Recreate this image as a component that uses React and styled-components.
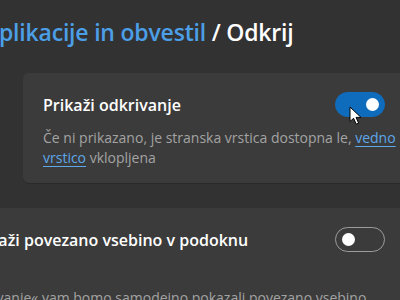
import React from "react";
import styled, { createGlobalStyle } from "styled-components";

const GlobalStyle = createGlobalStyle`
  html, body {
    margin: 0;
    padding: 0;
    background: #323232;
    overflow: hidden;
  }
  body {
    font-family: "Open Sans", "Noto Sans", "Liberation Sans", sans-serif;
  }
`;

const Page = styled.div`
  position: relative;
  width: 400px;
  height: 300px;
  overflow: hidden;
  background: #323232;
`;

const Heading = styled.h1`
  margin: 0;
  padding-top: 15px;
  margin-left: -16px;
  white-space: nowrap;
  font-size: 23px;
  line-height: 34px;
  font-weight: 600;
  letter-spacing: -0.2px;
  color: #ffffff;

  span {
    color: #4c9fe6;
  }
`;

const Card = styled.section`
  box-sizing: border-box;
  margin-left: ${(p) => p.$offset}px;
  margin-top: ${(p) => p.$top}px;
  width: calc(100% - ${(p) => p.$offset}px);
  height: ${(p) => p.$height}px;
  padding: 19px 15px 0 20px;
  background: #3b3b3b;
  border-radius: 6px 0 0 6px;
  box-shadow: 0 1px 0 #2a2a2a;
`;

const Row = styled.div`
  display: flex;
  align-items: center;
  justify-content: space-between;
  height: 25px;
`;

const Title = styled.div`
  font-size: 16px;
  font-weight: 600;
  color: #ffffff;
  white-space: nowrap;
`;

const Desc = styled.p`
  margin: ${(p) => p.$gap}px 0 0 ${(p) => p.$shift || 0}px;
  font-size: 14px;
  line-height: 20px;
  color: #a3a3a3;
  white-space: nowrap;

  a {
    color: #5ea7e8;
    text-decoration: underline;
    text-underline-offset: 3px;
  }
`;

const Toggle = styled.div`
  position: relative;
  flex: none;
  box-sizing: border-box;
  width: 50px;
  height: 25px;
  border-radius: 13px;
  background: ${(p) => (p.$on ? "#0f6cbd" : "transparent")};
  border: 1px solid ${(p) => (p.$on ? "#0f6cbd" : "#9c9c9c")};

  &::after {
    content: "";
    position: absolute;
    top: 5px;
    left: ${(p) => (p.$on ? "30px" : "6px")};
    width: 13px;
    height: 13px;
    border-radius: 50%;
    background: #ffffff;
  }
`;

const Cursor = styled.svg`
  position: absolute;
  left: 349px;
  top: 106px;
`;

export default function App() {
  return (
    <Page>
      <GlobalStyle />
      <Heading>
        <span>Aplikacije in obvestil</span> / Odkrij
      </Heading>

      <Card $offset={23} $top={24} $height={110}>
        <Row>
          <Title>Prikaži odkrivanje</Title>
          <Toggle $on />
        </Row>
        <Desc $gap={11}>
          Če ni prikazano, je stranska vrstica dostopna le, <a>vedno</a>
          <br />
          <a>vrstico</a> vklopljena
        </Desc>
      </Card>

      <Card $offset={-52} $top={25} $height={120}>
        <Row>
          <Title>Prikaži povezano vsebino v podoknu</Title>
          <Toggle />
        </Row>
        <Desc $gap={36} $shift={-5}>
          odkrivanje« vam bomo samodejno pokazali povezano vsebino
        </Desc>
      </Card>

      <Cursor width="14" height="20" viewBox="0 0 14 20">
        <path
          d="M1 1 L1 15.5 L4.6 12.3 L7.2 18.2 L9.6 17.1 L7.1 11.4 L12 11.4 Z"
          fill="#ffffff"
          stroke="#000000"
          strokeWidth="1"
          strokeLinejoin="round"
        />
      </Cursor>
    </Page>
  );
}
